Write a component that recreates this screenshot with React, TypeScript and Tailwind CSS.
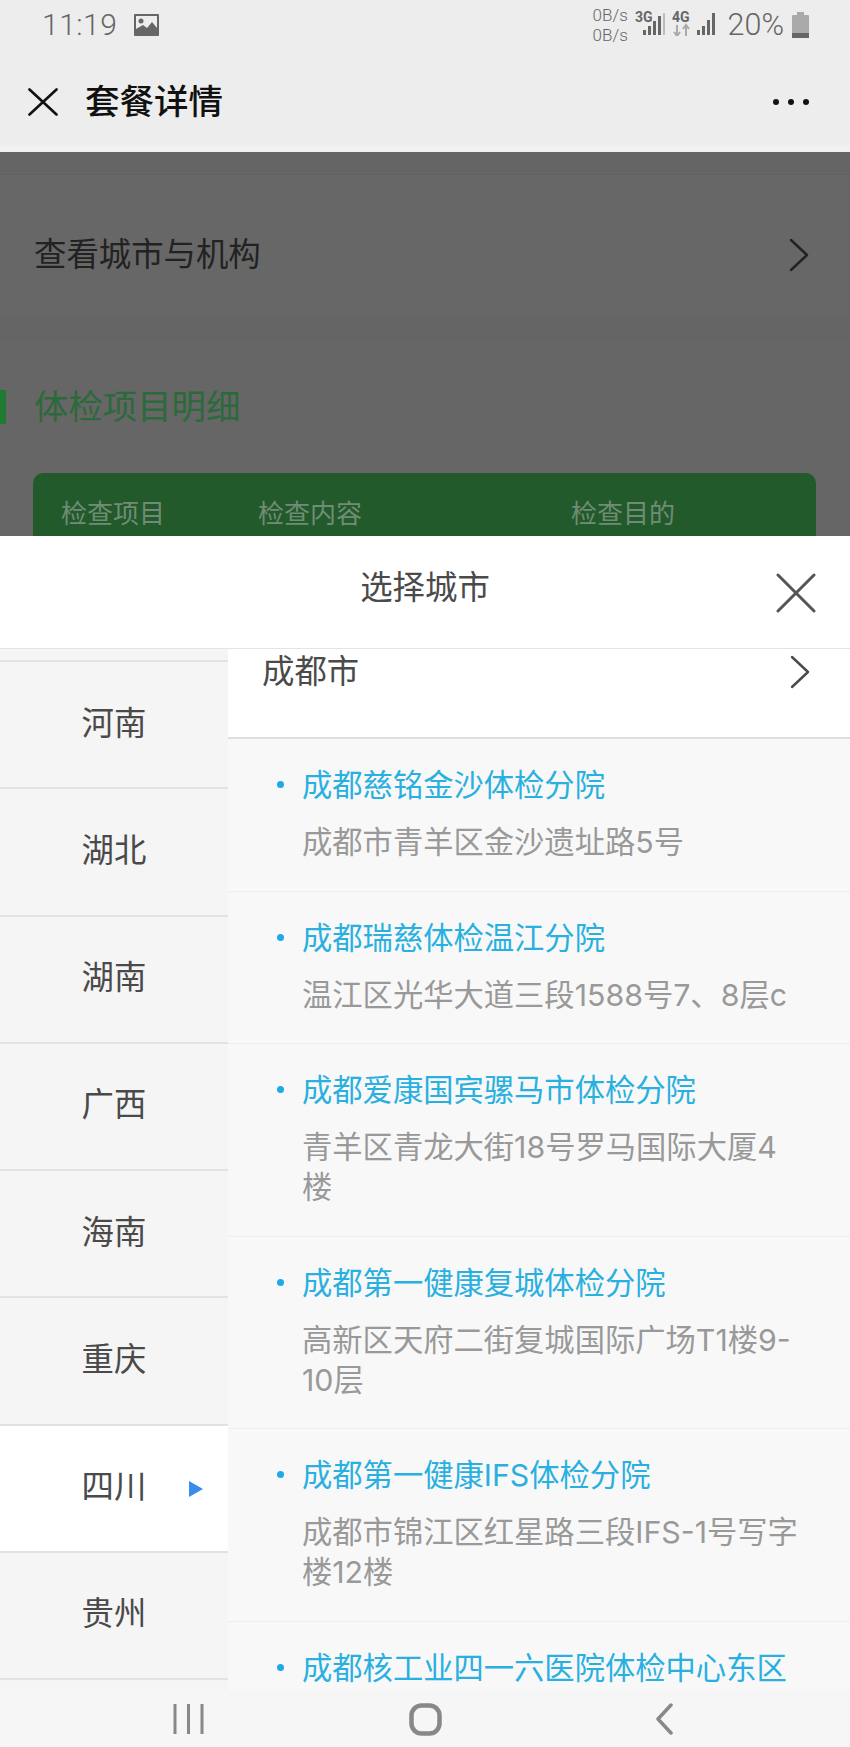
const provinces = ["河南", "湖北", "湖南", "广西", "海南", "重庆", "四川", "贵州"];

const clinics = [
  { name: "成都慈铭金沙体检分院", addr: "成都市青羊区金沙遗址路5号" },
  { name: "成都瑞慈体检温江分院", addr: "温江区光华大道三段1588号7、8层c" },
  { name: "成都爱康国宾骡马市体检分院", addr: "青羊区青龙大街18号罗马国际大厦4\n楼" },
  { name: "成都第一健康复城体检分院", addr: "高新区天府二街复城国际广场T1楼9-\n10层" },
  { name: "成都第一健康IFS体检分院", addr: "成都市锦江区红星路三段IFS-1号写字\n楼12楼" },
  { name: "成都核工业四一六医院体检中心东区", addr: "" },
];

function Chevron({ color }: { color: string }) {
  return (
    <svg width="20" height="34" viewBox="0 0 20 34" fill="none" stroke={color} strokeWidth="2.4" strokeLinecap="round" strokeLinejoin="round">
      <path d="M2 2 L18 17 L2 32" />
    </svg>
  );
}

function Signal({ label }: { label: string }) {
  return (
    <svg width="30" height="28" viewBox="0 0 30 28">
      <text x="0" y="14" fontSize="14" fontWeight="700" fill="#666" fontFamily="Roboto, sans-serif">{label}</text>
      <rect x="8" y="22" width="3" height="5" fill="#666" />
      <rect x="13" y="18" width="3" height="9" fill="#666" />
      <rect x="18" y="13" width="3" height="14" fill="#666" />
      <rect x="23" y="8" width="3" height="19" fill="#666" />
      <rect x="28" y="5" width="2" height="22" fill="#bbb" />
    </svg>
  );
}

export default function App() {
  return (
    <div className="w-[850px] h-[1747px] overflow-hidden flex flex-col font-['Inter','Noto_Sans_CJK_SC',sans-serif] bg-white">
      {/* status bar */}
      <div className="h-[50px] shrink-0 bg-[#ededed] flex items-center pl-[42px] pr-[41px] text-[#666] font-['Roboto','Noto_Sans_CJK_SC',sans-serif]">
        <span className="text-[30px] leading-[36px] font-light tracking-[0.5px]">11:19</span>
        <svg className="ml-[17px]" width="25" height="22" viewBox="0 0 25 22">
          <rect width="25" height="22" rx="1" fill="#666" />
          <rect x="2" y="2" width="21" height="14" fill="#ededed" />
          <circle cx="7" cy="7" r="2.5" fill="#666" />
          <path d="M2 20 L2 15 L9 11 L13 14 L18 8 L23 14 L23 20 Z" fill="#666" />
        </svg>
        <div className="ml-auto flex items-center">
          <div className="text-[17px] leading-[20px] font-light w-[39px] -mt-[1px]">
            <div>0B/s</div>
            <div>0B/s</div>
          </div>
          <div className="ml-[3px] -mt-[6px]"><Signal label="3G" /></div>
          <svg className="ml-[7px] -mt-[6px]" width="46" height="28" viewBox="0 0 46 28">
            <text x="0" y="14" fontSize="14" fontWeight="700" fill="#666" fontFamily="Roboto, sans-serif">4G</text>
            <path d="M5 17 V27 M2 24 L5 28 L8 24 M14 28 V18 M11 21 L14 17 L17 21" stroke="#aaa" strokeWidth="2" fill="none" />
            <rect x="25" y="22" width="3" height="5" fill="#666" />
            <rect x="30" y="18" width="3" height="9" fill="#666" />
            <rect x="35" y="12" width="3" height="15" fill="#666" />
            <rect x="40" y="5" width="3" height="22" fill="#666" />
          </svg>
          <span className="ml-[10px] text-[30.5px] leading-[36px] font-light">20%</span>
          <svg className="ml-[8px]" width="17" height="26" viewBox="0 0 17 26">
            <rect x="5" y="0" width="7" height="3" fill="#aaa" />
            <rect x="0" y="3" width="17" height="23" rx="1" fill="#aaa" />
            <rect x="0" y="21" width="17" height="5" fill="#666" />
          </svg>
        </div>
      </div>

      {/* title bar */}
      <div className="h-[102px] shrink-0 bg-[#ededed] border-b-[6px] border-[#f1f1f1] flex items-center pt-[7px] pl-[28px] pr-[41px]">
        <svg width="30" height="28" viewBox="0 0 30 28" stroke="#111" strokeWidth="2.6" strokeLinecap="round">
          <path d="M1.5 1.5 L28.5 26.5 M28.5 1.5 L1.5 26.5" />
        </svg>
        <span className="ml-[27px] text-[34.5px] leading-[44px] font-medium text-[#111]">套餐详情</span>
        <div className="ml-auto flex gap-[9px]">
          <span className="w-[6px] h-[6px] rounded-full bg-[#111]" />
          <span className="w-[6px] h-[6px] rounded-full bg-[#111]" />
          <span className="w-[6px] h-[6px] rounded-full bg-[#111]" />
        </div>
      </div>

      {/* dimmed page behind the sheet */}
      <div className="h-[384px] shrink-0 overflow-hidden bg-[#666]">
        <div className="h-[23px] bg-[#656565] border-b border-[#606060]" />
        <div className="h-[143px] bg-[#676767] flex items-center justify-between pt-[17px] pl-[34px] pr-[41px]">
          <span className="text-[32.4px] leading-[44px] text-[#222]">查看城市与机构</span>
          <Chevron color="#222" />
        </div>
        <div className="h-[22px] bg-[#656565]" />
        <div className="mt-[50px] flex items-center h-[34px]">
          <span className="w-[6px] h-[34px] bg-[#1f7a32]" />
          <span className="ml-[28px] text-[34.4px] leading-[44px] text-[#2b6a3a]">体检项目明细</span>
        </div>
        <div className="mt-[49px] ml-[33px] w-[783px] h-[90px] rounded-[10px] bg-[#225a2c] flex pt-[23px] text-[26px] leading-[36px] text-[#708c74]">
          <span className="ml-[28px] w-[197px]">检查项目</span>
          <span className="w-[313px]">检查内容</span>
          <span>检查目的</span>
        </div>
      </div>

      {/* city sheet */}
      <div className="flex-1 min-h-0 bg-white flex flex-col">
        <div className="h-[113px] shrink-0 border-b border-[#e4e4e4] flex items-start justify-between relative">
          <span className="w-full text-center mt-[31px] text-[32.4px] leading-[42px] text-[#4a4a4a]">选择城市</span>
          <button className="absolute right-[34px] top-[37px]">
            <svg width="40" height="40" viewBox="0 0 40 40" stroke="#555" strokeWidth="3" strokeLinecap="round">
              <path d="M2 2 L38 38 M38 2 L2 38" />
            </svg>
          </button>
        </div>
        <div className="flex-1 min-h-0 flex overflow-hidden">
          <div className="w-[228px] shrink-0 bg-[#f5f5f5] pt-[11px]">
            {provinces.map((p) => {
              const active = p === "四川";
              return (
                <div
                  key={p}
                  className={`h-[127.25px] border-t-2 border-[#e2e2e2] flex items-center justify-center relative pb-[2px] text-[32.4px] leading-[42px] text-[#4a4a4a] ${active ? "bg-white" : ""}`}
                >
                  {p}
                  {active && (
                    <svg className="absolute left-[189px] top-[55px]" width="14" height="16" viewBox="0 0 14 16">
                      <path d="M0 0 L14 8 L0 16 Z" fill="#3b8beb" />
                    </svg>
                  )}
                </div>
              );
            })}
            <div className="border-t-2 border-[#e2e2e2]" />
          </div>
          <div className="flex-1 min-w-0 bg-[#f8f8f8]">
            <div className="h-[90px] bg-white border-b-2 border-[#dedede] flex items-start justify-between pl-[34px] pr-[40px]">
              <span className="text-[32.4px] leading-[46px] text-[#4a4a4a]">成都市</span>
              <div className="mt-[6px]">
                <Chevron color="#4a4a4a" />
              </div>
            </div>
            {clinics.map((c) => (
              <div key={c.name} className="border-b border-[#eeeeee] pt-[26px] pb-[28.5px] pl-[74px] pr-[30px]">
                <div className="relative text-[30.3px] leading-[40px] text-[#29b0e0]">
                  <span className="absolute -left-[25px] top-[16px] w-[7px] h-[7px] rounded-full bg-[#1eaae6]" />
                  {c.name}
                </div>
                {c.addr && (
                  <div className="mt-[17px] text-[30.3px] leading-[40px] text-[#999] whitespace-pre-line">{c.addr}</div>
                )}
              </div>
            ))}
          </div>
        </div>
        {/* system nav */}
        <div className="h-[57px] shrink-0 bg-[#f6f6f6] relative">
          <div className="flex items-start h-full pt-[13px]">
            <svg className="ml-[173px]" width="31" height="32" viewBox="0 0 31 32" stroke="#888" strokeWidth="3">
              <path d="M2 1 V31 M15.5 1 V31 M29 1 V31" />
            </svg>
            <svg className="ml-[205px]" width="33" height="33" viewBox="0 0 33 33" fill="none" stroke="#888" strokeWidth="4.5">
              <rect x="2.5" y="2.5" width="28" height="28" rx="10" />
            </svg>
            <svg className="ml-[213px]" width="18" height="32" viewBox="0 0 18 32" fill="none" stroke="#888" strokeWidth="3.5" strokeLinecap="round" strokeLinejoin="round">
              <path d="M16 2 L3 16 L16 30" />
            </svg>
          </div>
        </div>
      </div>
    </div>
  );
}
